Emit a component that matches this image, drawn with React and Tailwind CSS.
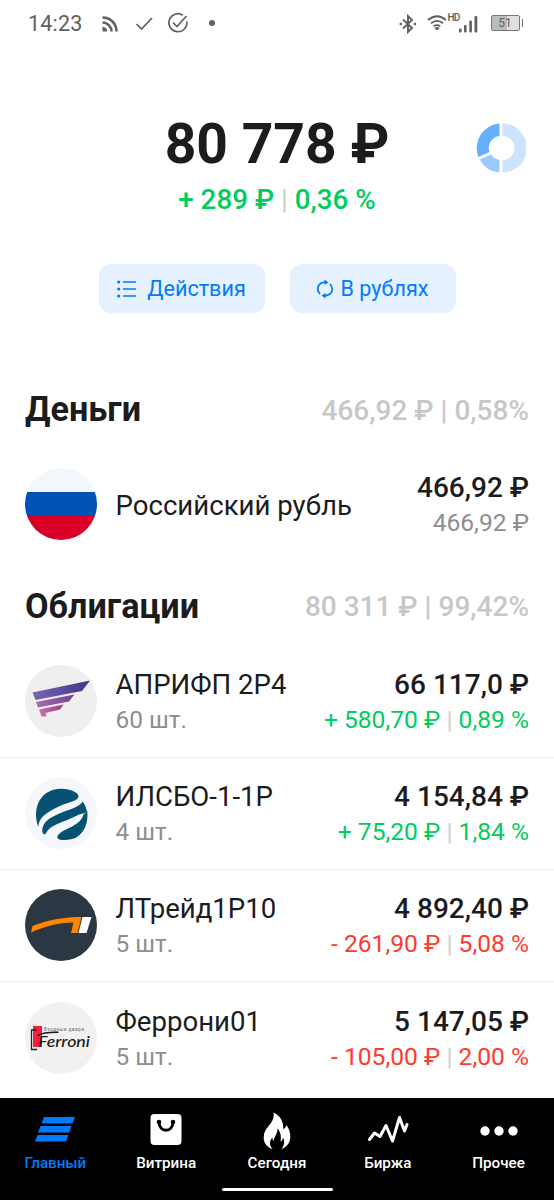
import React from "react";

function StatusBar() {
  return (
    <header className="flex h-12 shrink-0 items-center justify-between pr-[31px] pl-7 text-[#606060]">
      <div className="flex items-center">
        <span className="w-[74px] text-[21.5px] leading-none tracking-[0.2px]">14:23</span>
        <svg className="h-4 w-4" viewBox="0 0 16 16" fill="none" stroke="currentColor" strokeWidth="2.5">
          <path d="M0.5 1.5C8.5 1.5 14.5 7.5 14.5 15.5M0.5 6.5C5.5 6.5 9.5 10.5 9.5 15.5" />
          <path d="M0.5 10.8A5 5 0 0 1 5.2 15.5H0.5Z" fill="currentColor" stroke="none" />
        </svg>
        <svg className="ml-[17px] h-4 w-[18px]" viewBox="0 0 18 16" fill="none" stroke="currentColor" strokeWidth="1.7">
          <path d="M1.5 8L6.500 13L17 2" />
        </svg>
        <svg className="mb-0.5 ml-3.5 h-[22px] w-[22px]" viewBox="0 0 22 22" fill="none" stroke="currentColor" strokeWidth="1.7">
          <path d="M15.8 3.2A9 9 0 1 0 19.8 9.5M6 10.5L10 14.5L19.5 4" />
        </svg>
        <i className="mb-0.5 ml-5 h-1.5 w-1.5 rounded-full bg-[#606060]" />
      </div>
      <div className="flex items-center">
        <svg className="h-5 w-[18px]" viewBox="0 0 18 20" fill="none" stroke="currentColor" strokeWidth="1.9">
          <path d="M4 5.5L13 14L9 18V2L13 6L4 14.5" />
          <circle cx="1.8" cy="10" r="1.3" fill="currentColor" stroke="none" />
          <circle cx="16" cy="10" r="1.3" fill="currentColor" stroke="none" />
        </svg>
        <svg className="mb-0.5 ml-2.5 h-4 w-5" viewBox="0 0 20 16" fill="none" stroke="currentColor" strokeWidth="1.8">
          <path d="M1 5Q10 -2.5 19 5M4 8.3Q10 3.5 16 8.3M6.7 11.3Q10 8.8 13.3 11.3" />
          <path d="M7.3 13Q10 11 12.7 13L10 15.6Z" fill="currentColor" stroke="none" />
        </svg>
        <span className="mb-3 ml-px w-[11px] text-[10px] leading-none font-medium tracking-[-0.8px]">HD</span>
        <svg className="h-[18px] w-5" viewBox="0 0 20 18" fill="currentColor">
          <rect x="0" y="13.5" width="2.6" height="4" rx="1" />
          <rect x="5" y="10" width="2.6" height="7.5" rx="1" />
          <rect x="10.3" y="5.5" width="2.6" height="12" rx="1" />
          <rect x="15.5" y="1" width="2.8" height="16.5" rx="1" />
        </svg>
        <div className="mb-0.5 ml-3 flex h-4 w-[29px] items-center justify-center rounded-[2px] border border-[#777] bg-[linear-gradient(90deg,#bcbcbc_57%,#e0e0e0_57%)] text-[12px] leading-none">51</div>
        <i className="mb-0.5 ml-0.5 h-2 w-[1.5px] bg-[#707070]" />
      </div>
    </header>
  );
}

function ActionButton({ children }) {
  return (
    <button className="flex h-[49px] w-[166px] items-center justify-center rounded-xl bg-[#e5f1ff] text-[21.6px] leading-none text-[#007aff]">
      {children}
    </button>
  );
}

function SectionTitle({ title, total, className }) {
  return (
    <div className={`flex items-center justify-between px-[25px] ${className}`}>
      <h2 className="text-[34.2px] leading-10 font-bold">{title}</h2>
      <span className="pt-[3px] text-[28px] leading-10 font-medium whitespace-nowrap text-[#c7c7c7]">{total}</span>
    </div>
  );
}

function Row({ logo, name, count, amount, change, tone, last }) {
  return (
    <div className={`flex h-[112.25px] shrink-0 items-center px-[25px] ${last ? "" : "border-b-[1.5px] border-[#ededed]"}`}>
      <svg className="h-[72px] w-[72px] shrink-0" viewBox="0 0 72 72">{logo}</svg>
      <div className="ml-[18.5px] flex-1 pt-[2px] whitespace-nowrap">
        <div className="text-[27.600px] leading-[35px]">{name}</div>
        {count && <div className="text-[24.400px] leading-[35px] text-[#8e8e8e]">{count}</div>}
      </div>
      <div className="pt-[2px] text-right whitespace-nowrap">
        <div className="text-[28px] leading-[35px] font-medium">{amount}</div>
        <div className={`text-[24.600px] leading-[35px] ${tone}`}>{change}</div>
      </div>
    </div>
  );
}

const Bar = () => <span className="text-[#d0d0d0]">|</span>;

const flagLogo = (
  <>
    <clipPath id="flag"><circle cx="36" cy="36" r="36" /></clipPath>
    <g clipPath="url(#flag)">
      <rect width="72" height="24" fill="#f3f6fa" />
      <rect y="24" width="72" height="24" fill="#0052b4" />
      <rect y="48" width="72" height="24" fill="#d80027" />
    </g>
  </>
);

const wingLogo = (
  <>
    <defs>
      <linearGradient id="wing" x1="0" x2="1"><stop stopColor="#7766b2" /><stop offset="1" stopColor="#40348c" /></linearGradient>
      <linearGradient id="wing2" x1="0" x2="1"><stop stopColor="#a76cb2" /><stop offset="1" stopColor="#73418f" /></linearGradient>
      <linearGradient id="wing3" x1="0" x2="1"><stop stopColor="#c575b2" /><stop offset="1" stopColor="#9c3a83" /></linearGradient>
    </defs>
    <circle cx="36" cy="36" r="36" fill="#efefef" />
    <path d="M7.5 27.5L65 15.5L57 26L10.5 35Z" fill="url(#wing)" />
    <path d="M11 37L49.5 29.5L44 36.5L13 42.5Z" fill="url(#wing2)" />
    <path d="M14 44.5L38.5 39.5L35 44.5L20.5 48L21.5 51.5H16.5Z" fill="url(#wing3)" />
  </>
);

const waveLogo = (
  <>
    <circle cx="36" cy="36" r="36" fill="#f5f7fa" />
    <g fill="#075172">
      <path d="M13.300 49.700C7 33 14 12 36 11.700C44 11.700 53 15 53.500 18.700C53.500 21.500 51 23 48.300 24C41 26.500 34 29 28.300 32.300C20 37 14 41 13.300 49.700Z" />
      <path d="M57.700 24.500C55 28.500 50 30.500 45 32.500C38 35 32 37 25 41.300C20 44.500 17 49 17.300 54.700C18 57 19 57.500 20.500 57C22 54 24 51.500 27 49.700C34 45.500 41 44 48.300 40.300C51 39 55 36.500 58.300 36.500L62 35C61.500 31 60 28 57.700 24.500Z" />
      <path d="M58.500 37.500C57 43 53 46 48 49C43 52 38 53 34 57C31.500 59.500 32 62 35 62.700C40 63.500 47 63 52 60C59 55 63.500 47 62.300 34Z" />
    </g>
  </>
);

const roadLogo = (
  <>
    <circle cx="36" cy="36" r="36" fill="#2b3743" />
    <path d="M6 43.500L7.500 37C24 30.500 40 28 56.500 28L52.500 44H46L48.500 33.500C34 33.500 19 37.500 6 43.500Z" fill="#ff8500" />
    <path d="M57.500 28H66.500L61.500 44H53.500Z" fill="#fff" />
  </>
);

const ferroniLogo = (
  <>
    <circle cx="36" cy="36" r="36" fill="#f1f1f1" />
    <path d="M8 24H17V45H8Z" fill="#f61f3f" />
    <path d="M11.500 28H6.500V47.500H12" fill="none" stroke="#222" strokeWidth="1.3" />
    <text x="19" y="29" className="text-[4.5px]" fill="#666" textLength="40">Входные двери</text>
    <path d="M13 33.500Q18 30 33 30.200" fill="none" stroke="#181818" strokeWidth="1.400" strokeLinecap="round" />
    <text x="13" y="44.500" className="font-['Lato',sans-serif] text-[16px] font-medium italic" fill="#181818" textLength="52" lengthAdjust="spacingAndGlyphs">Ferroni</text>
  </>
);

function NavItem({ label, active, children }) {
  return (
    <a className={`flex flex-1 flex-col items-center ${active ? "text-[#007aff]" : "text-white"}`}>
      <svg className="mt-[11px] h-10 w-11" viewBox="0 0 44 40" fill="currentColor">{children}</svg>
      <span className="mt-1 text-[15.200px] leading-5 font-medium">{label}</span>
    </a>
  );
}

export default function App() {
  return (
    <div className="flex h-[1200px] w-[554px] flex-col overflow-hidden bg-white font-['Roboto',sans-serif] text-[#1c1c1e]">
      <StatusBar />
      <section className="grid h-[216px] shrink-0 grid-cols-[1fr_260px_1fr] pt-[61px]">
        <span />
        <div className="flex flex-col items-center whitespace-nowrap">
          <h1 className="text-[55.200px] leading-[70px] font-bold">80 778 ₽</h1>
          <div className="mt-[3px] text-[27.800px] leading-9 font-medium text-[#00cd5e]">+ 289 ₽ <Bar /> 0,36 %</div>
        </div>
        <svg className="mt-3.5 mr-7 h-[50px] w-[50px] justify-self-end" viewBox="0 0 50 50">
          <path d="M26.500 0.500A24.500 24.500 0 0 1 26.500 49.500V37A12 12 0 0 0 26.500 13Z" fill="#cce4ff" />
          <path d="M23.500 0.500V13A12 12 0 0 0 13.500 29L2.500 34A24.500 24.500 0 0 1 23.500 0.500Z" fill="#66afff" />
          <path d="M3.700 36.500L15 31.500A12 12 0 0 0 23.500 37V49.500A24.500 24.500 0 0 1 3.700 36.500Z" fill="#99caff" />
        </svg>
      </section>
      <div className="flex shrink-0 justify-center gap-[25px]">
        <ActionButton>
          <svg className="mr-[11px] h-[18px] w-[19px]" viewBox="0 0 19 18" fill="none" stroke="currentColor" strokeWidth="1.500">
            <path d="M6 2H19M6 9H19M6 16H19" />
            <path d="M1.700 2H1.710M1.700 9H1.710M1.700 16H1.710" strokeWidth="3.200" strokeLinecap="round" />
          </svg>
          Действия
        </ActionButton>
        <ActionButton>
          <svg className="mr-1.5 h-5 w-[18px]" viewBox="0 0 18 20" fill="none" stroke="currentColor" strokeWidth="1.700">
            <path d="M4 15C-0.500 10 2 3.500 9.500 3.200M14 5C18.500 10 16 16.500 8.500 16.800" />
            <path d="M8.500 0.500L12.500 3.500L8.500 6ZM9.500 14L5.500 16.500L9.500 19.500Z" fill="currentColor" stroke="none" />
          </svg>
          В рублях
        </ActionButton>
      </div>
      <SectionTitle title="Деньги" total="466,92 ₽ | 0,58%" className="h-[135px] shrink-0 pt-[57px]" />
      <Row logo={flagLogo} name="Российский рубль" amount="466,92 ₽" change="466,92 ₽" tone="text-[#8e8e8e]" last />
      <SectionTitle title="Облигации" total="80 311 ₽ | 99,42%" className="h-[85px] shrink-0 pt-1.5" />
      <Row logo={wingLogo} name="АПРИФП 2Р4" count="60 шт." amount="66 117,0 ₽" change={<>+ 580,70 ₽ <Bar /> 0,89 %</>} tone="text-[#00cd5e]" />
      <Row logo={waveLogo} name="ИЛСБО-1-1Р" count="4 шт." amount="4 154,84 ₽" change={<>+ 75,20 ₽ <Bar /> 1,84 %</>} tone="text-[#00cd5e]" />
      <Row logo={roadLogo} name="ЛТрейд1Р10" count="5 шт." amount="4 892,40 ₽" change={<>- 261,90 ₽ <Bar /> 5,08 %</>} tone="text-[#ff3b30]" />
      <Row logo={ferroniLogo} name="Феррони01" count="5 шт." amount="5 147,05 ₽" change={<>- 105,00 ₽ <Bar /> 2,00 %</>} tone="text-[#ff3b30]" last />
      <nav className="mt-auto flex h-[102px] shrink-0 flex-col items-center bg-black">
        <div className="flex w-full">
          <NavItem label="Главный" active>
            <path d="M11 8H42L39.500 14.500H8.500ZM7.500 17H38.500L36 23.500H5ZM4.500 26H35.500L33 32.500H2Z" />
          </NavItem>
          <NavItem label="Витрина">
            <rect x="6.500" y="5" width="31" height="31" rx="4" />
            <path d="M15 13C15 24 29 24 29 13" fill="none" stroke="#000" strokeWidth="2.800" />
            <circle cx="15" cy="13" r="2.300" fill="#000" />
            <circle cx="29" cy="13" r="2.300" fill="#000" />
          </NavItem>
          <NavItem label="Сегодня">
            <path d="M18.500 3.500C25 6.500 28.500 12 28.300 20C30 19.500 31 18 31.300 16C34 19 35.500 24 35.300 28C35 34 32 38 26 40.300C29.500 37 30 32 28 28.500C27.500 31 27 32 25.500 32.500C26.500 27 25.500 22.500 22.500 19.500C22.500 25 19.500 27 18.500 32C17.500 31 17.500 30 17.500 28.500C14 32 14 37 18 40.300C12 38.500 8.700 34 8.700 28.500C8.700 17 20.500 15 18.500 3.500Z" />
          </NavItem>
          <NavItem label="Биржа">
            <path d="M3.500 30.500L8.500 24L14 27.500L20 16.500L26.500 32L33.500 8.500L38.500 22L41 15.500" fill="none" stroke="currentColor" strokeWidth="3" strokeLinecap="round" strokeLinejoin="round" />
          </NavItem>
          <NavItem label="Прочее">
            <circle cx="8" cy="22" r="4.700" /><circle cx="22" cy="22" r="4.700" /><circle cx="36" cy="22" r="4.700" />
          </NavItem>
        </div>
        <i className="mt-auto mb-[9px] h-[3px] w-[111px] shrink-0 rounded-full bg-white" />
      </nav>
    </div>
  );
}
